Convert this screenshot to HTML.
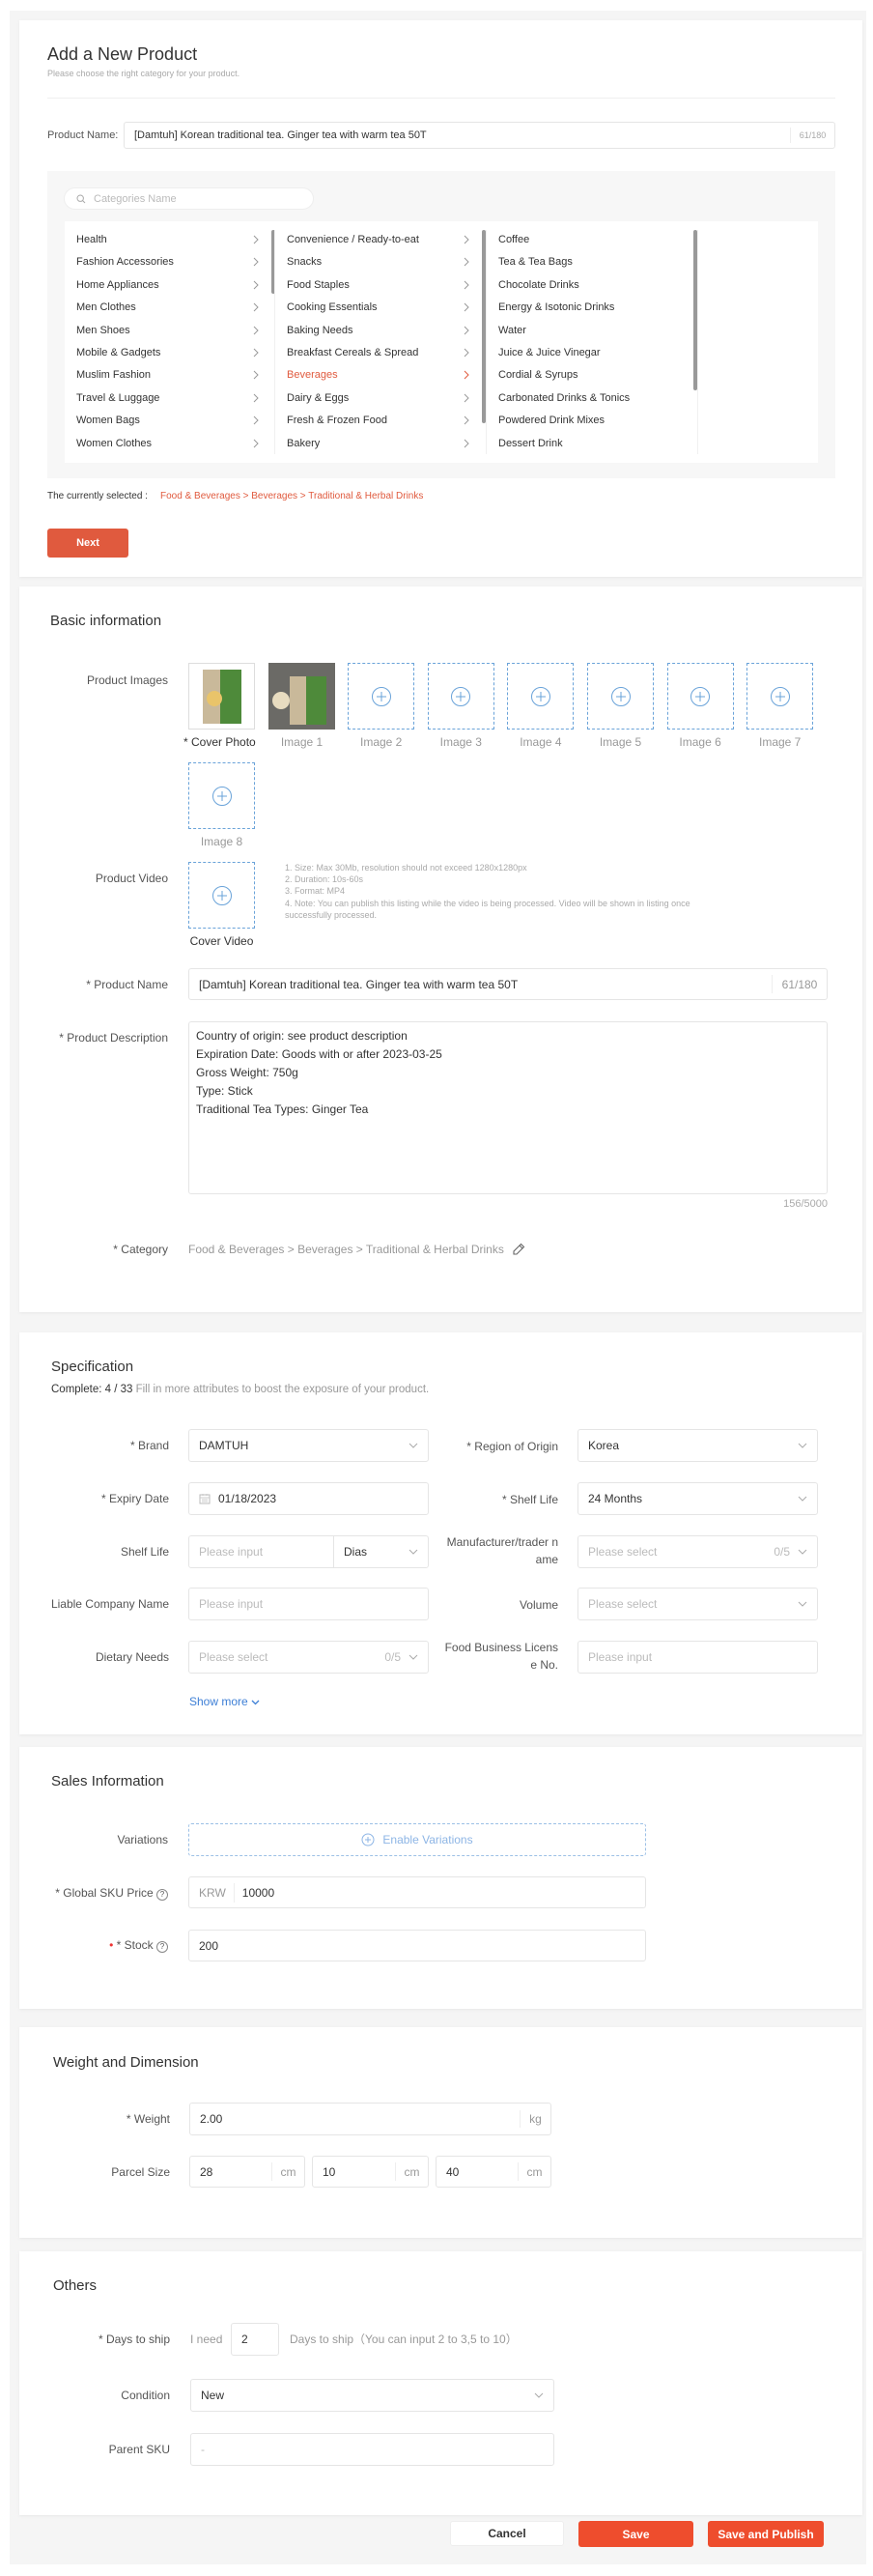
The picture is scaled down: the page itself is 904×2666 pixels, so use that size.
<!DOCTYPE html>
<html><head><meta charset="utf-8">
<style>
*{box-sizing:border-box;margin:0;padding:0}
body{width:904px;height:2666px;background:#fff;font-family:"Liberation Sans",Arial,sans-serif;color:#333;position:relative;overflow:hidden}
.a{position:absolute}
.t{position:absolute;white-space:nowrap;line-height:16px}
.bg{position:absolute;left:10px;top:11px;width:887px;height:2643px;background:#f5f5f5}
.card{position:absolute;left:20px;width:873px;background:#fff;box-shadow:0 1px 3px rgba(0,0,0,.06)}
.h{font-size:16px;color:#333;font-weight:500}
.lbl{position:absolute;font-size:12px;color:#555;text-align:right;white-space:nowrap;line-height:16px}
.in{position:absolute;border:1px solid #e5e5e5;border-radius:3px;background:#fff;font-size:12px;color:#333;padding-left:10px;display:flex;align-items:center;white-space:nowrap}
.ph{color:#bbb}
.chev{position:absolute;right:10px;top:50%;margin-top:-3px}
.cat{font-size:11px;color:#333}
.arr{position:absolute}
.box{position:absolute;width:69px;height:69px;border:1px dashed #6aa3d9;display:flex;align-items:center;justify-content:center}
.cap{position:absolute;width:69px;text-align:center;font-size:12px;color:#999;line-height:16px}
.btn{position:absolute;border-radius:3px;font-size:12px;font-weight:bold;display:flex;align-items:center;justify-content:center}
</style></head><body>
<div class="bg"></div>

<!-- Card 1 -->
<div class="card" style="top:21px;height:576px"></div>
<div class="t" style="left:49px;top:45px;font-size:18px;line-height:22px;color:#333">Add a New Product</div>
<div class="t" style="left:49px;top:70px;font-size:9px;line-height:12px;color:#aaa">Please choose the right category for your product.</div>
<div class="a" style="left:49px;top:101px;width:816px;height:1px;background:#efefef"></div>
<div class="lbl" style="left:49px;top:132px;font-size:11px">Product Name:</div>
<div class="in" style="left:128px;top:126px;width:737px;height:28px;font-size:11px">[Damtuh] Korean traditional tea. Ginger tea with warm tea 50T
 <span class="a" style="right:0;top:5px;bottom:5px;width:46px;border-left:1px solid #eee;color:#aaa;font-size:9px;display:flex;align-items:center;justify-content:center">61/180</span></div>
<div class="a" style="left:49px;top:177px;width:816px;height:318px;background:#f7f7f7"></div>
<div class="in" style="left:66px;top:194px;width:259px;height:23px;border-radius:12px;border-color:#eee;font-size:11px;padding-left:12px">
<svg width="10" height="10" viewBox="0 0 10 10"><circle cx="4.2" cy="4.2" r="3.2" fill="none" stroke="#aaa"/><path d="M6.5 6.5L9 9" stroke="#aaa"/></svg>
<span class="ph" style="margin-left:8px">Categories Name</span></div>
<div class="a" style="left:67px;top:229px;width:780px;height:250px;background:#fff"></div>
<div class="a" style="left:281px;top:238px;width:4px;height:66px;background:#999;border-radius:2px"></div>
<div class="a" style="left:499px;top:238px;width:4px;height:200px;background:#999;border-radius:2px"></div>
<div class="a" style="left:718px;top:238px;width:4px;height:166px;background:#999;border-radius:2px"></div>
<div class="a" style="left:284px;top:238px;width:1px;height:232px;background:#f0f0f0"></div>
<div class="a" style="left:503px;top:238px;width:1px;height:232px;background:#f0f0f0"></div>
<div class="a" style="left:722px;top:238px;width:1px;height:232px;background:#f0f0f0"></div>
<div id="cats"></div>
<div class="t" style="left:49px;top:506px;font-size:10px;color:#333">The currently selected :</div>
<div class="t" style="left:166px;top:506px;font-size:10px;color:#e05a3e">Food &amp; Beverages &gt; Beverages &gt; Traditional &amp; Herbal Drinks</div>
<div class="btn" style="left:49px;top:547px;width:84px;height:30px;background:#e05a3e;color:#fff;font-size:11px">Next</div>

<!-- Card 2 -->
<div class="card" style="top:607px;height:751px"></div>
<div class="t h" style="left:52px;top:634px;font-size:15px;line-height:18px">Basic information</div>
<div class="lbl" style="right:730px;top:696px">Product Images</div>
<div class="a" style="left:195px;top:686px;width:69px;height:69px;border:1px solid #ddd;background:#fff;display:flex;align-items:center;justify-content:center">
 <div style="width:40px;height:56px;background:linear-gradient(90deg,#c9b99a 0 45%,#4e8a3a 45% 100%);position:relative"><div style="position:absolute;left:4px;top:22px;width:16px;height:16px;border-radius:50%;background:#e9c46a"></div></div></div>
<div class="a" style="left:278px;top:686px;width:69px;height:69px;background:#6b6a66;overflow:hidden">
 <div style="position:absolute;left:22px;top:14px;width:38px;height:50px;background:linear-gradient(90deg,#c9b99a 0 45%,#4e8a3a 45% 100%)"></div>
 <div style="position:absolute;left:4px;top:30px;width:18px;height:18px;border-radius:50%;background:#e8dcc0"></div></div>
<div class="t" style="left:190px;top:760px;font-size:12px;color:#333">* Cover Photo</div>
<div class="cap" style="left:278px;top:760px">Image 1</div>
<div id="boxes"></div>
<div class="lbl" style="right:730px;top:901px">Product Video</div>
<div class="t" style="left:295px;top:892px;font-size:9px;line-height:12.2px;color:#aaa;white-space:normal;width:430px">1. Size: Max 30Mb, resolution should not exceed 1280x1280px<br>2. Duration: 10s-60s<br>3. Format: MP4<br>4. Note: You can publish this listing while the video is being processed. Video will be shown in listing once successfully processed.</div>
<div class="lbl" style="right:730px;top:1011px">* Product Name</div>
<div class="in" style="left:195px;top:1002px;width:662px;height:33px">[Damtuh] Korean traditional tea. Ginger tea with warm tea 50T
 <span class="a" style="right:0;top:6px;bottom:6px;width:57px;border-left:1px solid #eee;color:#999;display:flex;align-items:center;justify-content:center">61/180</span></div>
<div class="lbl" style="right:730px;top:1066px">* Product Description</div>
<div class="a" style="left:195px;top:1057px;width:662px;height:179px;border:1px solid #e5e5e5;border-radius:3px;padding:5px 7px;font-size:12px;line-height:19px;color:#333">Country of origin: see product description<br>Expiration Date: Goods with or after 2023-03-25<br>Gross Weight: 750g<br>Type: Stick<br>Traditional Tea Types: Ginger Tea</div>
<div class="t" style="right:47px;top:1238px;font-size:11px;color:#aaa">156/5000</div>
<div class="lbl" style="right:730px;top:1285px">* Category</div>
<div class="t" style="left:195px;top:1285px;font-size:12px;color:#999">Food &amp; Beverages &gt; Beverages &gt; Traditional &amp; Herbal Drinks</div>
<svg class="a" style="left:530px;top:1286px" width="14" height="14" viewBox="0 0 14 14"><path d="M9.5 1.5l3 3-7.5 7.5H2v-3z M8 3l3 3" fill="none" stroke="#666" stroke-width="1.1"/></svg>

<!-- Card 3 -->
<div class="card" style="top:1379px;height:416px"></div>
<div class="t h" style="left:53px;top:1406px;font-size:15px;line-height:18px">Specification</div>
<div class="t" style="left:53px;top:1430px;font-size:11.5px;color:#333">Complete: 4 / 33 <span style="color:#999">Fill in more attributes to boost the exposure of your product.</span></div>
<div id="spec"></div>
<div class="t" style="left:196px;top:1753px;font-size:12px;color:#3d7fd6">Show more <svg width="9" height="6" viewBox="0 0 9 6"><path d="M1 1l3.5 3.5L8 1" fill="none" stroke="#3d7fd6" stroke-width="1.3"/></svg></div>

<!-- Card 4 -->
<div class="card" style="top:1808px;height:271px"></div>
<div class="t h" style="left:53px;top:1835px;font-size:15px;line-height:18px">Sales Information</div>
<div class="lbl" style="right:730px;top:1896px">Variations</div>
<div class="a" style="left:195px;top:1887px;width:474px;height:34px;border:1px dashed #9cc0e6;border-radius:3px;display:flex;align-items:center;justify-content:center;color:#8db5e5;font-size:12px">
<svg width="14" height="14" viewBox="0 0 14 14" style="margin-right:8px"><circle cx="7" cy="7" r="6" fill="none" stroke="#8db5e5"/><path d="M7 4v6M4 7h6" stroke="#8db5e5"/></svg>Enable Variations</div>
<div class="lbl" style="right:730px;top:1951px">* Global SKU Price <span style="display:inline-block;width:12px;height:12px;border:1px solid #888;border-radius:50%;font-size:8px;line-height:10px;text-align:center">?</span></div>
<div class="in" style="left:195px;top:1942px;width:474px;height:33px"><span style="color:#999">KRW</span><span style="width:1px;height:20px;background:#eee;margin:0 8px"></span>10000</div>
<div class="lbl" style="right:730px;top:2005px"><span style="color:#e33">•</span> * Stock <span style="display:inline-block;width:12px;height:12px;border:1px solid #888;border-radius:50%;font-size:8px;line-height:10px;text-align:center">?</span></div>
<div class="in" style="left:195px;top:1997px;width:474px;height:33px">200</div>

<!-- Card 5 -->
<div class="card" style="top:2098px;height:218px"></div>
<div class="t h" style="left:55px;top:2126px;font-size:15px;line-height:18px">Weight and Dimension</div>
<div class="lbl" style="right:728px;top:2185px">* Weight</div>
<div class="in" style="left:196px;top:2176px;width:375px;height:34px">2.00<span class="a" style="right:0;top:7px;bottom:7px;width:32px;border-left:1px solid #eee;color:#999;display:flex;align-items:center;justify-content:center">kg</span></div>
<div class="lbl" style="right:728px;top:2240px">Parcel Size</div>
<div class="in" style="left:196px;top:2231px;width:120px;height:33px">28<span class="a" style="right:0;top:6px;bottom:6px;width:34px;border-left:1px solid #eee;color:#999;display:flex;align-items:center;justify-content:center">cm</span></div>
<div class="in" style="left:323px;top:2231px;width:121px;height:33px">10<span class="a" style="right:0;top:6px;bottom:6px;width:34px;border-left:1px solid #eee;color:#999;display:flex;align-items:center;justify-content:center">cm</span></div>
<div class="in" style="left:451px;top:2231px;width:120px;height:33px">40<span class="a" style="right:0;top:6px;bottom:6px;width:34px;border-left:1px solid #eee;color:#999;display:flex;align-items:center;justify-content:center">cm</span></div>

<!-- Card 6 -->
<div class="card" style="top:2330px;height:273px"></div>
<div class="t h" style="left:55px;top:2357px;font-size:15px;line-height:18px">Others</div>
<div class="lbl" style="right:728px;top:2413px">* Days to ship</div>
<div class="t" style="left:197px;top:2413px;font-size:12px;color:#999">I need</div>
<div class="in" style="left:239px;top:2404px;width:50px;height:34px">2</div>
<div class="t" style="left:300px;top:2413px;font-size:12px;color:#999">Days to ship（You can input 2 to 3,5 to 10）</div>
<div class="lbl" style="right:728px;top:2471px">Condition</div>
<div class="in" style="left:197px;top:2462px;width:377px;height:34px">New<svg class="chev" width="10" height="6" viewBox="0 0 10 6"><path d="M1 1l4 4 4-4" fill="none" stroke="#aaa"/></svg></div>
<div class="lbl" style="right:728px;top:2527px">Parent SKU</div>
<div class="in" style="left:197px;top:2518px;width:377px;height:34px;color:#bbb">-</div>

<div class="btn" style="left:466px;top:2609px;width:118px;height:26px;background:#fff;color:#333;border:1px solid #eee">Cancel</div>
<div class="btn" style="left:599px;top:2609px;width:119px;height:27px;background:#ee4d2d;color:#fff">Save</div>
<div class="btn" style="left:733px;top:2609px;width:120px;height:27px;background:#ee4d2d;color:#fff">Save and Publish</div>

<script>
(function(){
var c1=["Health","Fashion Accessories","Home Appliances","Men Clothes","Men Shoes","Mobile & Gadgets","Muslim Fashion","Travel & Luggage","Women Bags","Women Clothes"];
var c2=["Convenience / Ready-to-eat","Snacks","Food Staples","Cooking Essentials","Baking Needs","Breakfast Cereals & Spread","Beverages","Dairy & Eggs","Fresh & Frozen Food","Bakery"];
var c3=["Coffee","Tea & Tea Bags","Chocolate Drinks","Energy & Isotonic Drinks","Water","Juice & Juice Vinegar","Cordial & Syrups","Carbonated Drinks & Tonics","Powdered Drink Mixes","Dessert Drink"];
var h="";
function esc(s){return s.replace(/&/g,"&amp;")}
function ar(x,y,c){return '<svg class="arr" style="left:'+x+'px;top:'+(y+3)+'px" width="6" height="10" viewBox="0 0 6 10"><path d="M1 1l4 4-4 4" fill="none" stroke="'+c+'"/></svg>';}
for(var i=0;i<10;i++){var y=240+i*23.4;
h+='<div class="t cat" style="left:79px;top:'+y+'px">'+esc(c1[i])+'</div>'+ar(262,y,'#999');
var col=i==6?'color:#e05a3e':'';
h+='<div class="t cat" style="left:297px;top:'+y+'px;'+col+'">'+esc(c2[i])+'</div>'+ar(480,y,i==6?'#e05a3e':'#999');
h+='<div class="t cat" style="left:516px;top:'+y+'px">'+esc(c3[i])+'</div>';}
document.getElementById("cats").outerHTML=h;
var plus='<svg width="22" height="22" viewBox="0 0 22 22"><circle cx="11" cy="11" r="9.5" fill="none" stroke="#6aa3d9"/><path d="M11 6v10M6 11h10" stroke="#6aa3d9"/></svg>';
var b="";
for(var k=2;k<=7;k++){var x=195+k*82.6;
b+='<div class="box" style="left:'+x+'px;top:686px">'+plus+'</div><div class="cap" style="left:'+x+'px;top:760px">Image '+k+'</div>';}
b+='<div class="box" style="left:195px;top:789px">'+plus+'</div><div class="cap" style="left:195px;top:863px">Image 8</div>';
b+='<div class="box" style="left:195px;top:892px">'+plus+'</div><div class="cap" style="left:190px;top:966px;width:79px;color:#333">Cover Video</div>';
document.getElementById("boxes").outerHTML=b;
var chev='<svg class="chev" width="10" height="6" viewBox="0 0 10 6"><path d="M1 1l4 4 4-4" fill="none" stroke="#aaa"/></svg>';
var rows=[
 ["* Brand",'DAMTUH'+chev,"* Region of Origin",'Korea'+chev],
 ["* Expiry Date",'<svg width="12" height="12" viewBox="0 0 12 12" style="margin-right:8px"><rect x="1" y="2" width="10" height="9" fill="none" stroke="#bbb"/><path d="M1 5h10M4 1v2M8 1v2M3 7h6M3 9h6" stroke="#ccc"/></svg>01/18/2023',"* Shelf Life",'24 Months'+chev],
 ["Shelf Life",'<span class="ph">Please input</span><span class="a" style="left:149px;top:0;bottom:0;border-left:1px solid #e5e5e5;padding-left:10px;display:flex;align-items:center;right:0">Dias</span>'+chev,"Manufacturer/trader n<br>ame",'<span class="ph">Please select</span><span class="a ph" style="right:28px">0/5</span>'+chev],
 ["Liable Company Name",'<span class="ph">Please input</span>',"Volume",'<span class="ph">Please select</span>'+chev],
 ["Dietary Needs",'<span class="ph">Please select</span><span class="a ph" style="right:28px">0/5</span>'+chev,"Food Business Licens<br>e No.",'<span class="ph">Please input</span>']];
var s="";
for(var r=0;r<5;r++){var top=1479+r*54.8;var two=rows[r][2].indexOf("<br>")>0;
s+='<div class="lbl" style="right:729px;top:'+(top+9)+'px">'+rows[r][0]+'</div>';
s+='<div class="in" style="left:195px;top:'+top+'px;width:249px;height:34px">'+rows[r][1]+'</div>';
s+='<div class="lbl" style="right:326px;top:'+(two?top-2:top+9)+'px;line-height:18px">'+rows[r][2]+'</div>';
s+='<div class="in" style="left:598px;top:'+top+'px;width:249px;height:34px">'+rows[r][3]+'</div>';}
document.getElementById("spec").outerHTML=s;
})();
</script>
</body></html>
